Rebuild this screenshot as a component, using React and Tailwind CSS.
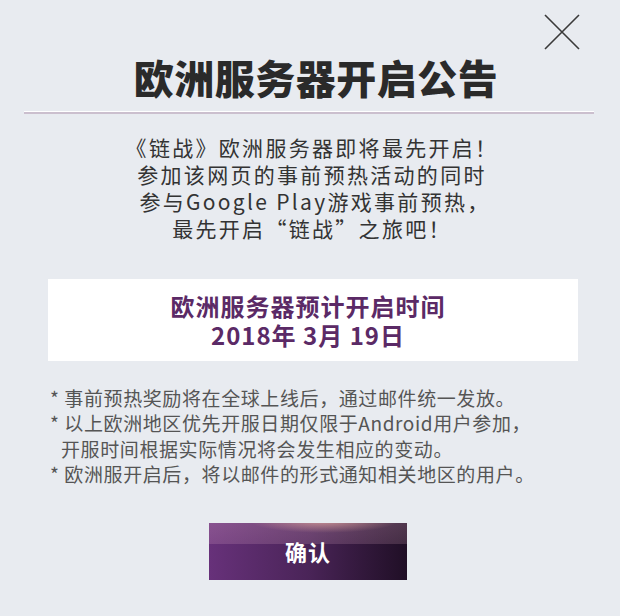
import React from "react";

export default function App() {
  return (
    <div className="relative w-[620px] h-[616px] overflow-hidden bg-[#e8ebf0] font-['Noto_Sans_CJK_SC',sans-serif] text-[#333]">
      <button className="absolute left-[543px] top-[13px] w-[38px] h-[38px]" aria-label="close">
        <svg width="38" height="38" viewBox="0 0 38 38">
          <path d="M2 2 L36 36 M36 2 L2 36" stroke="#3a3a3a" strokeWidth="1.6" fill="none" />
        </svg>
      </button>

      <div className="pt-[54px] pl-[12px] flex flex-col items-center">
        <h1 className="text-[40px] leading-[46px] font-black text-[#2a2a2a] tracking-[0.5px]">
          欧洲服务器开启公告
        </h1>
      </div>
      <div className="mx-[24px] mr-[26px] mt-[11px] h-[3px] border-t border-white bg-[#cbbfce]" />

      <div className="mt-[20px] pl-[4px] flex flex-col items-center text-[21px] leading-[27px] tracking-[2.3px] text-[#333]">
        <p>《链战》欧洲服务器即将最先开启！</p>
        <p>参加该网页的事前预热活动的同时</p>
        <p className="pl-[6px]">参与Google Play游戏事前预热，</p>
        <p>最先开启“链战”之旅吧！</p>
      </div>

      <div className="ml-[48px] mr-[42px] mt-[37px] h-[82px] pr-[10px] bg-white flex flex-col items-center justify-center text-[#5b2a66] font-bold text-[24px] leading-[29px] tracking-[1px]">
        <p>欧洲服务器预计开启时间</p>
        <p>2018年 3月 19日</p>
      </div>

      <div className="mt-[24px] ml-[50px] text-[19px] leading-[25.3px] tracking-[0.6px] text-[#555]">
        <p>* 事前预热奖励将在全球上线后，通过邮件统一发放。</p>
        <p>* 以上欧洲地区优先开服日期仅限于Android用户参加，</p>
        <p className="pl-[11px]">开服时间根据实际情况将会发生相应的变动。</p>
        <p>* 欧洲服开启后，将以邮件的形式通知相关地区的用户。</p>
      </div>

      <div className="mt-[37px] flex pl-[209px]">
        <button className="relative w-[198px] h-[57px] overflow-hidden bg-gradient-to-r from-[#67317a] via-[#4a2458] to-[#200f26] text-white text-[22px] font-bold tracking-[1px]">
          <span className="absolute inset-x-0 top-0 h-[21px] bg-gradient-to-b from-[rgba(255,200,220,0.22)] to-[rgba(255,200,220,0.16)]" />
          <span className="absolute left-[40px] top-[-14px] w-[150px] h-[24px] rounded-full bg-[radial-gradient(ellipse_at_center,rgba(255,190,170,0.6),rgba(255,190,170,0)_70%)]" />
          <span className="relative">确认</span>
        </button>
      </div>
    </div>
  );
}
